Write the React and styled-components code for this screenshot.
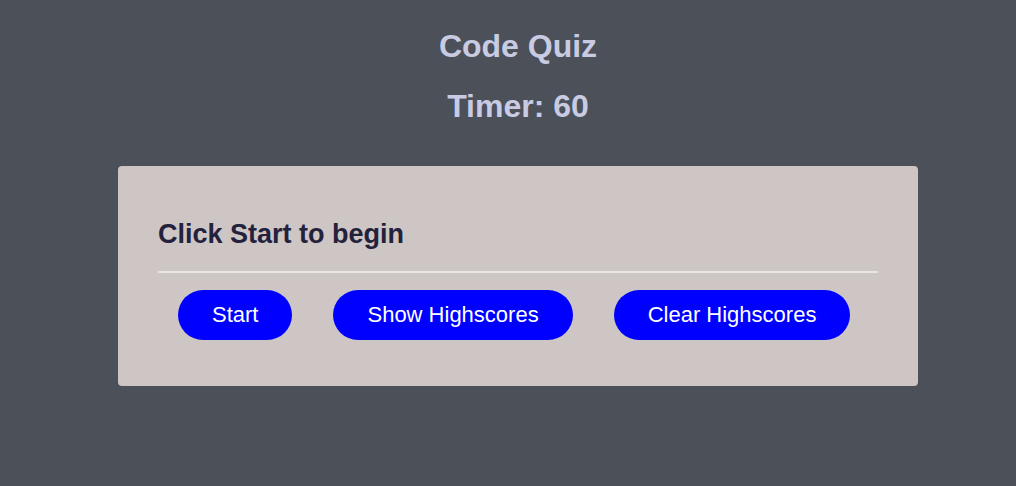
import React from 'react';
import styled, { createGlobalStyle } from 'styled-components';

const GlobalStyle = createGlobalStyle`
  html, body {
    margin: 0;
    padding: 0;
    background: #4b5059;
    font-family: "Liberation Sans", Arial, sans-serif;
  }
`;

const Page = styled.div`
  display: flex;
  flex-direction: column;
  align-items: center;
  padding: 26px 0 0 20px;
`;

const Title = styled.h1`
  margin: 0;
  font-size: 32px;
  font-weight: bold;
  color: #c9cbe2;
  line-height: 40px;
`;

const Timer = styled.h2`
  margin: 20px 0 0;
  font-size: 32px;
  font-weight: bold;
  color: #c9cbe2;
  line-height: 40px;
`;

const Card = styled.div`
  box-sizing: border-box;
  width: 800px;
  margin-top: 40px;
  background: #cec6c4;
  border-radius: 4px;
  padding: 50px 40px 46px;
`;

const Heading = styled.h3`
  margin: 0;
  font-size: 27px;
  font-weight: bold;
  color: #24213c;
  line-height: 36px;
  padding-bottom: 19px;
  border-bottom: 2px solid #e9e5e4;
`;

const ButtonRow = styled.div`
  display: flex;
  gap: 41px;
  padding: 17px 0 0 20px;
`;

const Button = styled.button`
  height: 50px;
  padding: 0 34px;
  border: none;
  border-radius: 25px;
  background: #0000ff;
  color: #ffffff;
  font-family: "Liberation Sans", Arial, sans-serif;
  font-size: 22px;
  cursor: pointer;
`;

const App = () => (
  <>
    <GlobalStyle />
    <Page>
      <Title>Code Quiz</Title>
      <Timer>Timer: 60</Timer>
      <Card>
        <Heading>Click Start to begin</Heading>
        <ButtonRow>
          <Button>Start</Button>
          <Button>Show Highscores</Button>
          <Button>Clear Highscores</Button>
        </ButtonRow>
      </Card>
    </Page>
  </>
);

export default App;
